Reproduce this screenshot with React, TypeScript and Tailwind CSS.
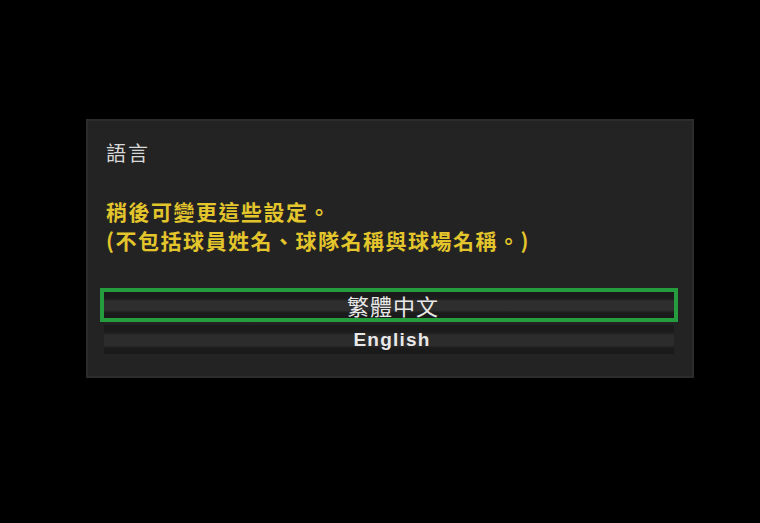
export default function App() {
  const cjk = { fontFamily: '"Noto Sans CJK TC", "Noto Sans", sans-serif' };
  return (
    <div className="w-[760px] h-[523px] bg-black flex items-start justify-start">
      <div className="ml-[86px] mt-[119px] w-[608px] h-[259px] bg-[#232323] border-2 border-[#2c2c2c] shadow-[0_0_6px_rgba(0,0,0,0.8)] flex flex-col">
        <div className="pl-[18px] pt-[20px] text-[20px] leading-[24px] tracking-[2px] text-[#d8d8d8]" style={cjk}>
          語言
        </div>
        <div
          className="pl-[18px] mt-[32px] text-[21px] leading-[29px] tracking-[1.5px] font-bold text-[#e3c52c]"
          style={cjk}
        >
          <div>稍後可變更這些設定。</div>
          <div>(不包括球員姓名、球隊名稱與球場名稱。)</div>
        </div>
        <div className="mt-[33px] pl-[12px] pr-[14px] flex flex-col gap-[3px]">
          <div className="border-[4px] border-[#259c3d] h-[34px]">
            <div className="h-full pl-[8px] pt-[1px] bg-[linear-gradient(to_bottom,#1a1a1a_0%,#1c1c1c_25%,#2e2e2e_35%,#2e2e2e_70%,#1b1b1b_80%,#191919_100%)] flex items-center justify-center text-[22px] tracking-[1px] text-[#e8e8e8]" style={cjk}>
              繁體中文
            </div>
          </div>
          <div className="mx-[4px] h-[29px] pl-[6px] pt-[2px] bg-[linear-gradient(to_bottom,#1a1a1a_0%,#1c1c1c_25%,#2c2c2c_35%,#2c2c2c_70%,#1b1b1b_80%,#191919_100%)] flex items-center justify-center text-[19px] font-bold tracking-[1.2px] text-[#e8e8e8]" style={{ fontFamily: '"Liberation Sans", Arial, sans-serif' }}>
            English
          </div>
        </div>
      </div>
    </div>
  );
}
